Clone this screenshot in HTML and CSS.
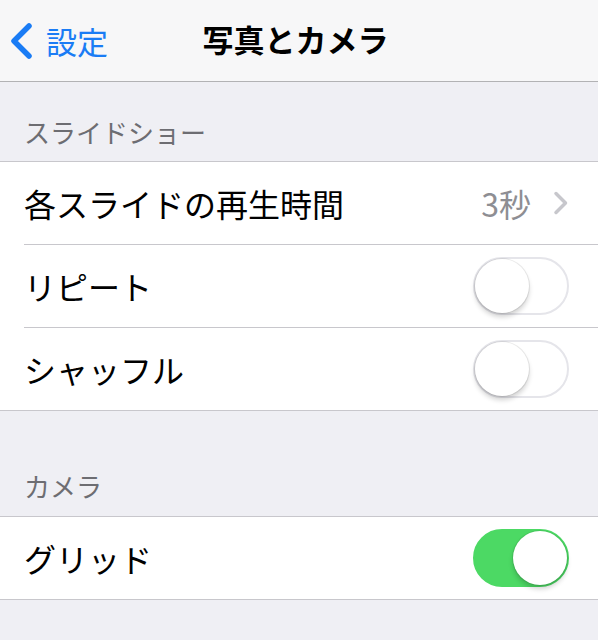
FILE: index.html
```html
<!DOCTYPE html>
<html lang="ja">
<head>
  <meta charset="UTF-8">
  <title>写真とカメラ</title>
  <link rel="stylesheet" href="styles.css">
</head>
<body>
  <header class="navbar">
    <a class="back">
      <svg class="back-icon" width="26" height="36" viewBox="0 0 26 36">
        <path d="M21 3 L6 18 L21 33" fill="none" stroke="#1a7cf5" stroke-width="5.5" stroke-linecap="round" stroke-linejoin="round"/>
      </svg>
      <span>設定</span>
    </a>
    <h1 class="title">写真とカメラ</h1>
  </header>

  <div class="section-head first">スライドショー</div>
  <ul class="group">
    <li class="row">
      <div class="row-inner">
        <span class="label">各スライドの再生時間</span>
        <span class="value">3秒</span>
        <svg class="chevron" width="16" height="24" viewBox="0 0 16 24">
          <path d="M3 2.5 L12.5 12 L3 21.5" fill="none" stroke="#c7c7cc" stroke-width="3.5" stroke-linecap="round" stroke-linejoin="round"/>
        </svg>
      </div>
    </li>
    <li class="row">
      <div class="row-inner">
        <span class="label">リピート</span>
        <span class="switch"><span class="knob"></span></span>
      </div>
    </li>
    <li class="row">
      <div class="row-inner">
        <span class="label">シャッフル</span>
        <span class="switch"><span class="knob"></span></span>
      </div>
    </li>
  </ul>

  <div class="section-head second">カメラ</div>
  <ul class="group">
    <li class="row">
      <div class="row-inner">
        <span class="label">グリッド</span>
        <span class="switch on"><span class="knob"></span></span>
      </div>
    </li>
  </ul>
</body>
</html>
```

FILE: styles.css
```css
body {
  margin: 0;
  width: 598px;
  height: 640px;
  overflow: hidden;
  background: #efeff4;
  font-family: "Noto Sans CJK JP", "Noto Sans", sans-serif;
  color: #000;
}
.navbar {
  position: relative;
  display: flex;
  align-items: center;
  height: 81px;
  background: #f7f7f8;
  border-bottom: 1px solid #b2b2b4;
}
.back {
  display: flex;
  align-items: center;
  gap: 12px;
  padding-left: 8px;
  color: #1a7cf5;
  font-size: 31px;
  line-height: 40px;
}
.back-icon {
  display: block;
}
.title {
  position: absolute;
  left: 0;
  right: 0;
  top: 0;
  margin: 0;
  text-align: center;
  font-size: 31px;
  font-weight: 700;
  line-height: 78px;
  padding-right: 7px;
}
.section-head {
  padding: 0 24px;
  color: #6d6d72;
  font-size: 26px;
  line-height: 30px;
}
.section-head.first {
  padding-top: 35px;
  padding-bottom: 14px;
}
.section-head.second {
  padding-top: 60px;
  padding-bottom: 15px;
}
.group {
  margin: 0;
  padding: 0;
  list-style: none;
  background: #fff;
  border-top: 1px solid #c8c7cc;
  border-bottom: 1px solid #c8c7cc;
}
.row {
  padding-left: 24px;
}
.row-inner {
  display: flex;
  align-items: center;
  height: 82px;
  padding-right: 29px;
  border-bottom: 1px solid #c8c7cc;
}
.row:last-child .row-inner {
  border-bottom: none;
}
.label {
  flex: 1;
  font-size: 32px;
  line-height: 40px;
}
.value {
  color: #8e8e93;
  font-size: 32px;
  line-height: 40px;
  margin-right: 22px;
}
.chevron {
  display: block;
}
.switch {
  position: relative;
  box-sizing: border-box;
  width: 96px;
  height: 58px;
  border-radius: 29px;
  border: 2px solid #e5e5ea;
  background: #fff;
}
.switch .knob {
  position: absolute;
  top: 0;
  left: 0;
  width: 54px;
  height: 54px;
  border-radius: 50%;
  background: #fff;
  box-shadow: 0 0 0 1px rgba(0, 0, 0, 0.08), 0 4px 5px rgba(0, 0, 0, 0.18);
}
.switch.on {
  background: #4cd964;
  border-color: #4cd964;
}
.switch.on .knob {
  left: auto;
  right: 0;
}
```
